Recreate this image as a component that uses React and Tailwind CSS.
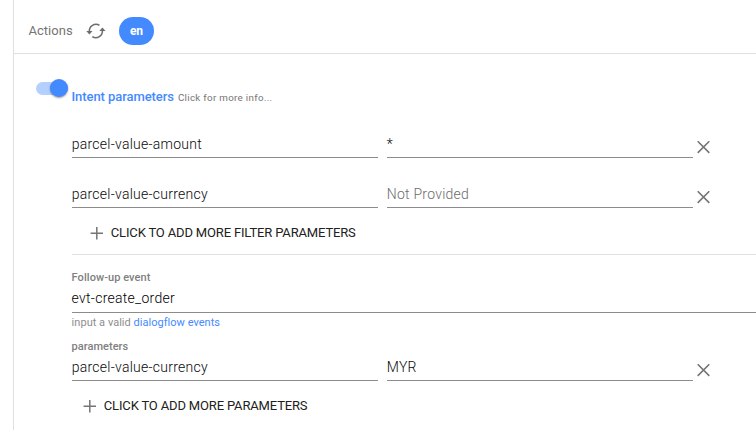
import React from "react";

function RefreshIcon() {
  return (
    <svg width="20" height="20" viewBox="0 0 20 20" fill="none" className="shrink-0">
      <path d="M3.4 10.6A6.6 6.6 0 0 1 13.5 4.4" stroke="#6d6d6d" strokeWidth="1.6" />
      <path d="M16.4 9.4A6.6 6.6 0 0 1 6.3 15.6" stroke="#6d6d6d" strokeWidth="1.6" />
      <path d="M0.3 10H6.5L3.4 13.6Z" fill="#6d6d6d" />
      <path d="M13.3 10H19.5L16.4 6.4Z" fill="#6d6d6d" />
    </svg>
  );
}

function PlusIcon() {
  return (
    <svg width="13" height="13" viewBox="0 0 13 13" className="shrink-0">
      <path d="M6.8 0V12.4M0.6 6.2H13" stroke="#757575" strokeWidth="1.5" />
    </svg>
  );
}

function CloseIcon() {
  return (
    <svg width="13" height="13" viewBox="0 0 13 13" className="mt-[10px] ml-1 shrink-0">
      <path d="M0.7 0.3L12.3 11.9M12.3 0.3L0.7 11.9" stroke="#757575" strokeWidth="1.6" />
    </svg>
  );
}

function Field({ value, placeholder }) {
  return (
    <div className="h-[27px] w-[306px] border-b border-[#8c8c8c] text-[14px] leading-[26px] font-light tracking-[0.26px] whitespace-nowrap">
      {value ? (
        <span className="-ml-[0.3px] text-[#080808]">{value}</span>
      ) : (
        <span className="-ml-[0.3px] text-[#6c6c6c]">{placeholder}</span>
      )}
    </div>
  );
}

function ParameterRow({ name, value }) {
  return (
    <div className="flex h-[27px] items-start">
      <Field value={name} />
      <div className="w-[9px] shrink-0" />
      <Field value={value} placeholder="Not Provided" />
      <CloseIcon />
    </div>
  );
}

function AddButton({ children }) {
  return (
    <button className="flex h-[20px] items-center gap-[8px] text-[13px] leading-[20px] tracking-[-0.16px] whitespace-nowrap text-[#212121]">
      <PlusIcon />
      <span className="-ml-[0.2px]">{children}</span>
    </button>
  );
}

export default function App() {
  return (
    <div className="h-[430px] w-[756px] overflow-hidden bg-white pl-[13px] font-[Roboto,sans-serif]">
      <div className="h-full border-l border-[#e0e0e0]">
        <header className="flex h-[54px] items-center border-b border-[#e0e0e0] pt-[8px] pl-[14.4px]">
          <span className="w-[43.6px] text-[13px] leading-[20px] tracking-[0.04px] whitespace-nowrap text-[#757575]">Actions</span>
          <span className="ml-[14px]">
            <RefreshIcon />
          </span>
          <span className="ml-[13px] flex h-[28px] w-[35px] items-center justify-center rounded-[14px] bg-[#448aff] text-[12px] font-bold text-white">
            en
          </span>
        </header>

        <main className="flex pl-[22px]">
          <div className="mt-[25px] flex h-[18px] w-[36px] shrink-0 items-center">
            <div className="flex h-[13px] w-[31.5px] items-center justify-end rounded-full bg-[#b4d0ff]">
              <div className="h-[18px] w-[18px] shrink-0 rounded-full bg-[#448aff] shadow-[0_1px_2px_rgba(0,0,0,0.4)]" />
            </div>
          </div>

          <div className="min-w-0 flex-1">
            <div className="mt-[33px] -ml-[0.5px] flex h-[20px] items-baseline gap-[4px] leading-[20px] whitespace-nowrap">
              <span className="text-[13px] font-medium tracking-[-0.07px] text-[#448aff]">Intent parameters</span>
              <span className="text-[9.75px] tracking-[0.32px] text-[#757575]">Click for more info...</span>
            </div>

            <div className="mt-[24px] flex flex-col gap-[23px]">
              <ParameterRow name="parcel-value-amount" value="*" />
              <ParameterRow name="parcel-value-currency" />
            </div>

            <div className="mt-[15px] pl-[18px]">
              <AddButton>CLICK TO ADD MORE FILTER PARAMETERS</AddButton>
            </div>

            <div className="mt-[11px] border-t border-[#e0e0e0]" />

            <div className="mt-[15px] -ml-[0.4px] h-[15px] text-[11px] leading-[16px] font-medium tracking-[0.06px] text-[#808080]">Follow-up event</div>
            <div className="h-[28px] border-b border-[#8c8c8c] text-[14px] leading-[27px] font-light tracking-[0.28px] text-black">
              <span className="-ml-[0.4px]">evt-create_order</span>
            </div>
            <div className="mt-[2px] -ml-[0.4px] h-[16px] text-[11px] leading-[16px] tracking-[0.03px] text-[#8e8e8e]">
              input a valid <span className="text-[#448aff]">dialogflow events</span>
            </div>
            <div className="mt-[8px] -ml-[0.4px] h-[15px] text-[11px] leading-[16px] font-medium tracking-[0.03px] text-[#808080]">parameters</div>
            <ParameterRow name="parcel-value-currency" value="MYR" />

            <div className="mt-[15px] pl-[11px]">
              <AddButton>CLICK TO ADD MORE PARAMETERS</AddButton>
            </div>
          </div>
        </main>
      </div>
    </div>
  );
}
